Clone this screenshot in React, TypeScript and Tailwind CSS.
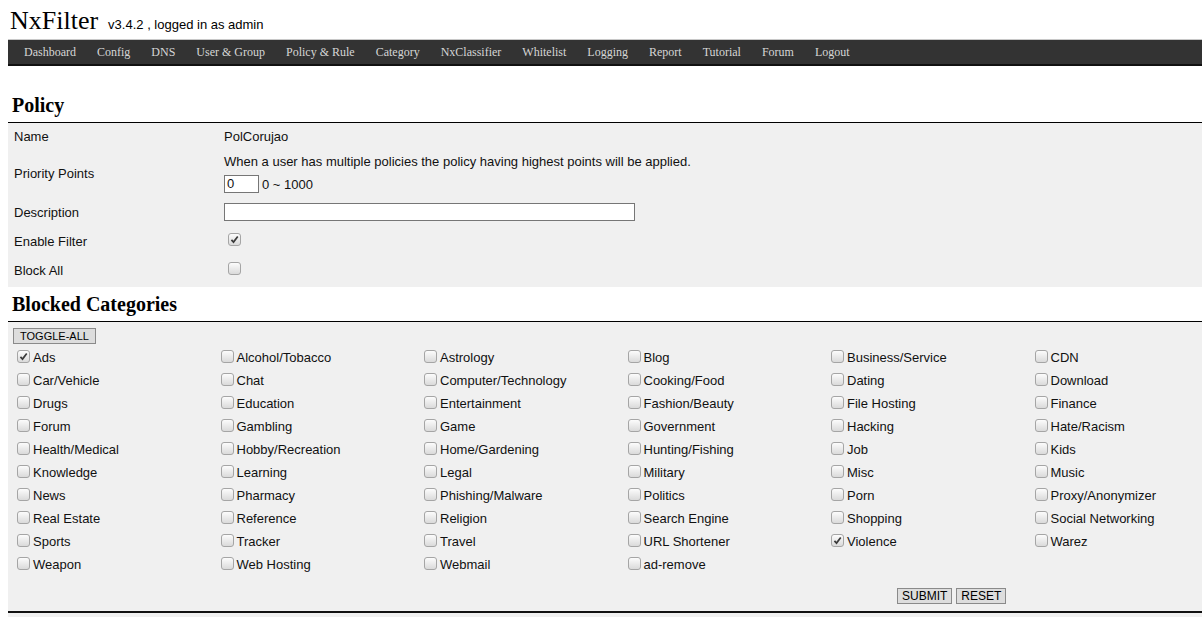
import React from "react";

const sans = "font-['Liberation_Sans',Arial,sans-serif]";
const serif = "font-['Liberation_Serif','Times_New_Roman',serif]";

const menu = [
    "Dashboard",
    "Config",
    "DNS",
    "User & Group",
    "Policy & Rule",
    "Category",
    "NxClassifier",
    "Whitelist",
    "Logging",
    "Report",
    "Tutorial",
    "Forum",
    "Logout",
];

const categories = [
    "Ads", "Alcohol/Tobacco", "Astrology", "Blog", "Business/Service", "CDN",
    "Car/Vehicle", "Chat", "Computer/Technology", "Cooking/Food", "Dating", "Download",
    "Drugs", "Education", "Entertainment", "Fashion/Beauty", "File Hosting", "Finance",
    "Forum", "Gambling", "Game", "Government", "Hacking", "Hate/Racism",
    "Health/Medical", "Hobby/Recreation", "Home/Gardening", "Hunting/Fishing", "Job", "Kids",
    "Knowledge", "Learning", "Legal", "Military", "Misc", "Music",
    "News", "Pharmacy", "Phishing/Malware", "Politics", "Porn", "Proxy/Anonymizer",
    "Real Estate", "Reference", "Religion", "Search Engine", "Shopping", "Social Networking",
    "Sports", "Tracker", "Travel", "URL Shortener", "Violence", "Warez",
    "Weapon", "Web Hosting", "Webmail", "ad-remove",
];

const checkedCats = ["Ads", "Violence"];

function Check({ checked = false }: { checked?: boolean }) {
    return (
        <span className="inline-flex w-[13px] h-[13px] shrink-0 items-center justify-center rounded-[3px] border border-[#a5a5a5] bg-linear-to-b from-[#fcfcfc] to-[#dadada] mb-[3px]">
            {checked && (
                <svg viewBox="0 0 10 10" className="w-[9px] h-[9px]">
                    <path d="M1.6 5.4 L3.9 7.9 L8.6 1.6" stroke="#3a3a3a" strokeWidth="1.9" fill="none" />
                </svg>
            )}
        </span>
    );
}

function Heading({ children }: { children: React.ReactNode }) {
    return (
        <h2 className={`${serif} font-bold text-[20px] leading-[24px] pl-[4px] pb-[5px] border-b border-black text-black`}>
            {children}
        </h2>
    );
}

function Row({ label, h, children }: { label: string; h: string; children: React.ReactNode }) {
    return (
        <div className={`flex items-center ${h}`}>
            <div className="w-[216px] pl-[6px] shrink-0">{label}</div>
            <div>{children}</div>
        </div>
    );
}

export default function App() {
    return (
        <div className={`${sans} text-[13px] leading-[15px] text-[#111] bg-white h-[617px] overflow-hidden`}>
            {/* header */}
            <div className="h-[39px] pl-[10px] pt-[6px] flex items-baseline">
                <span className={`${serif} text-[26px] leading-[30px] text-black`}>NxFilter</span>
                <span className="ml-[10px] text-[13px] text-black">v3.4.2 , logged in as admin</span>
            </div>

            <div className="pl-[8px]">
                {/* menu */}
                <nav className={`${serif} text-[12px] h-[27px] bg-[#333333] border-t border-[#c8c8c8] border-b-2 border-b-[#111] flex items-center pl-[16px] gap-[21px] text-[#d6d6d6]`}>
                    {menu.map((m) => (
                        <span key={m} className="whitespace-nowrap">{m}</span>
                    ))}
                </nav>

                {/* policy */}
                <div className="mt-[27px]">
                    <Heading>Policy</Heading>
                </div>
                <div className="bg-[#f0f0f0] pb-[2px]">
                    <Row label="Name" h="h-[26px]">PolCorujao</Row>
                    <Row label="Priority Points" h="h-[48px]">
                        <div className="pt-[1px]">When a user has multiple policies the policy having highest points will be applied.</div>
                        <div className="flex items-center mt-[6px]">
                            <div className="w-[35px] h-[18px] bg-white border border-[#767676] pl-[2px] leading-[16px]">0</div>
                            <span className="ml-[3px]">0 ~ 1000</span>
                        </div>
                    </Row>
                    <Row label="Description" h="h-[30px]">
                        <div className="w-[411px] h-[18px] bg-white border border-[#767676]" />
                    </Row>
                    <Row label="Enable Filter" h="h-[28px]">
                        <div className="pl-[4px] flex">
                            <Check checked />
                        </div>
                    </Row>
                    <Row label="Block All" h="h-[30px]">
                        <div className="pl-[4px] flex">
                            <Check />
                        </div>
                    </Row>
                </div>

                {/* blocked categories */}
                <div className="mt-[5px]">
                    <Heading>Blocked Categories</Heading>
                </div>
                <div className="bg-[#f0f0f0] pt-[6px] pb-[7px] border-b-2 border-[#111]">
                    <div className="pl-[5px]">
                        <button className="h-[16px] px-[6px] bg-[#dddddd] border border-[#8a8a8a] text-[11px] leading-[14px] text-black">
                            TOGGLE-ALL
                        </button>
                    </div>
                    <div className="grid grid-cols-[repeat(6,203.5px)] pl-[9px] mt-[2px]">
                        {categories.map((c) => (
                            <label key={c} className="h-[23px] flex items-center gap-[3px] whitespace-nowrap">
                                <Check checked={checkedCats.includes(c)} />
                                <span>{c}</span>
                            </label>
                        ))}
                    </div>
                    <div className="flex gap-[4px] pl-[889px] mt-[12px]">
                        <button className="h-[16px] px-[4px] bg-[#dddddd] border border-[#8a8a8a] text-[12px] leading-[14px] text-black">
                            SUBMIT
                        </button>
                        <button className="h-[16px] px-[4px] bg-[#dddddd] border border-[#8a8a8a] text-[12px] leading-[14px] text-black">
                            RESET
                        </button>
                    </div>
                </div>
                <div className="bg-[#f0f0f0] h-[20px] pl-[216px] pt-[1px]">
                    You need to set up the classifier to use this feature.
                </div>
            </div>
        </div>
    );
}
